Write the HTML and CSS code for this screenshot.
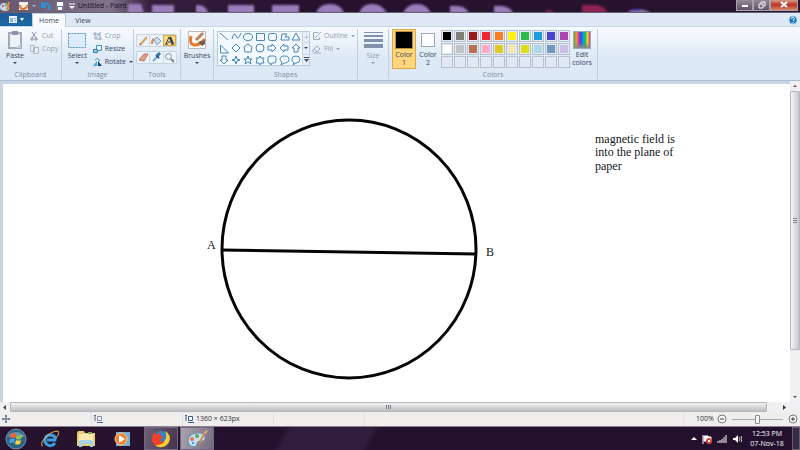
FILE: index.html
```html
<!DOCTYPE html>
<html lang="en">
<head>
<meta charset="utf-8">
<title>Untitled - Paint</title>
<link rel="stylesheet" href="styles.css">
</head>
<body>
<header class="titlebar">
  <svg class="glass" width="800" height="13" aria-hidden="true">
    <g fill="#9a7dbb">
      <path d="M128 13V4h13l3 9zM152 13V5h22v8zM196 13V5q10-1 12 8zM228 13V5h26v8zM272 13V5h27v8zM316 13q3-9 14-9t14 9zM359 13q3-9 13-9t15 9zM403 13q4-9 14-9t14 9zM450 13V6q15-2 19 7zM494 13V6q15-2 19 7zM627 13q8-7 23-1v1z"/>
    </g>
    <g fill="#8d2452"><path d="M544 13q5-6 10 0zM582 13V5h14q10 1 11 8z"/></g>
    <path d="M632 10h8" stroke="#3c36a5" stroke-width="2"/>
  </svg>
  <nav class="quick" aria-label="Quick access">
    <svg width="12" height="12" viewBox="0 0 12 12"><path d="M0 7q0-4 4-4t5 4-4 4-5-4" fill="#b9d9ee"/><circle cx="3" cy="6" r="1" fill="#e33"/><circle cx="6" cy="5" r="1" fill="#3a4"/><path d="M9 2L7 10" stroke="#f08a28" stroke-width="2"/></svg>
    <svg width="12" height="12" viewBox="0 0 12 12"><path d="M2 2h9v8H2z" fill="#f4eee9"/><path d="M3 5q0 4 3 4t5-4" fill="none" stroke="#df742f" stroke-width="2"/></svg>
    <i class="arrow pale"></i>
    <svg width="10" height="10" viewBox="0 0 10 10"><path d="M1 1v5h4M2 5q2-4 5-2t0 6" fill="none" stroke="#2c94dc" stroke-width="2"/></svg>
    <svg width="8" height="10" viewBox="0 0 8 10"><path d="M0 1h8v8H0z" fill="#7775a7"/><path d="M1 1h6v4H1zM2 6h4v3H2z" fill="#fff"/></svg>
    <svg width="7" height="8" viewBox="0 0 7 8"><path d="M0 2h6" stroke="#fff"/><path d="M0 4h6L3 7z" fill="#fff"/></svg>
  </nav>
  <h1>Untitled - Paint</h1>
  <div class="window-buttons">
    <button aria-label="Minimize"><svg width="8" height="8"><path d="M1 5h6" stroke="#fff" stroke-width="2"/></svg></button>
    <button aria-label="Restore"><svg width="8" height="8"><path d="M3 2V1h4v4H6M1 3h4v4H1z" fill="none" stroke="#fff"/></svg></button>
    <button class="close" aria-label="Close"><svg width="8" height="8"><path d="M1 1l6 5M7 1L1 6" stroke="#fff" stroke-width="2"/></svg></button>
  </div>
</header>

<nav class="tabs">
  <button class="file" aria-label="Paint menu"><svg width="20" height="9"><path d="M3 1h8v7H3z" fill="#e7f0fa"/><path d="M4 3h3v4H4zM8 3h2v1H8zM8 5h2v1H8z" fill="#8fb7de"/><path d="M14 3h4l-2 3z" fill="#fff"/></svg></button>
  <button class="tab active">Home</button>
  <button class="tab">View</button>
  <button class="help" aria-label="Help"><svg width="10" height="10"><circle cx="5" cy="5" r="4" fill="#1878c0" stroke="#9cc8e8"/><path d="M3.500 4q0-2 2-1.500t0 2.500v1M5 7v1" fill="none" stroke="#fff"/></svg></button>
</nav>

<main class="ribbon">
  <section class="group clipboard">
    <div class="tools-area">
      <button class="big"><svg width="18" height="19" viewBox="0 0 18 19"><path d="M3 2h12v15H3z" fill="#edf2f9" stroke="#a1a9bc" stroke-width="2"/><path d="M6 0h6v4H6z" fill="#8b94a8"/><path d="M15 12v5h-5z" fill="#c4cddb"/></svg>Paste<i class="arrow"></i></button>
      <div class="stack">
        <button disabled><svg width="9" height="10"><path d="M2 1l4 6M6 1L2 7" stroke="#8996ad"/><path d="M1 7h2v2H1zM5 7h2v2H5z" fill="none" stroke="#8996ad"/></svg>Cut</button>
        <button disabled><svg width="9" height="10"><path d="M.500 1.500h4v6h-4zM3.500 3.500h5v6h-5z" fill="#eaf0f8" stroke="#a9b6c8"/></svg>Copy</button>
      </div>
    </div>
    <h2>Clipboard</h2>
  </section>
  <section class="group image">
    <div class="tools-area">
      <button class="big"><svg width="20" height="19"><path d="M1.500 2.500h17v14h-17z" fill="#deebf8" stroke="#4f95c5" stroke-dasharray="2 1"/></svg>Select<i class="arrow"></i></button>
      <div class="stack">
        <button disabled><svg width="9" height="10"><path d="M2 1v7h7M0 3h7v6M3 7l5-6" fill="none" stroke="#94a4ba"/></svg>Crop</button>
        <button><svg width="9" height="10"><path d="M3.500 1.500h5v5h-5z" fill="#eef6fd" stroke="#3c8fc5"/><path d="M.500 5.500h4v3h-4z" fill="#9bcdec" stroke="#3579ad"/></svg>Resize</button>
        <button><svg width="9" height="10"><path d="M0 9l4-5v5z" fill="#45a4d8"/><path d="M5 9V4l4 5z" fill="#153e6c"/><path d="M2 3q3-3 5 1" fill="none" stroke="#2c8fc7"/></svg>Rotate<i class="arrow"></i></button>
      </div>
    </div>
    <h2>Image</h2>
  </section>
  <section class="group tools">
    <div class="tools-area tool-rows">
      <div class="tool-row">
        <button aria-label="Pencil"><svg width="11" height="11"><path d="M2 10L9 2" stroke="#dda161" stroke-width="2"/><path d="M1 10l1-2 1 1z" fill="#555"/></svg></button>
        <button aria-label="Fill with color"><svg width="11" height="11"><path d="M3 5l3-3 4 4-4 4z" fill="#cadced" stroke="#7fa3c5"/><path d="M3 4q-2 1-2 5" stroke="#e18842" stroke-width="2" fill="none"/></svg></button>
        <button class="selected" aria-label="Text"><svg width="11" height="11"><path d="M2 9L5 2l4 7M4 7h3M1 9h3M7 9h3" fill="none" stroke="#233a59"/><path d="M6 2l3 7" stroke="#233a59" stroke-width="2"/></svg></button>
      </div>
      <div class="tool-row">
        <button aria-label="Eraser"><svg width="11" height="11"><path d="M1 8l5-6h4L6 9z" fill="#e5a084" stroke="#bd7963"/></svg></button>
        <button aria-label="Color picker"><svg width="11" height="11"><path d="M2 9l4-4" stroke="#71aad1" stroke-width="2"/><path d="M5 3l3 3" stroke="#234f7b" stroke-width="2"/><path d="M6 4l3-3" stroke="#3d719e" stroke-width="3"/></svg></button>
        <button aria-label="Magnifier"><svg width="11" height="11"><circle cx="4.500" cy="4.500" r="3" fill="#e9f5ff" stroke="#8194a8"/><path d="M7 7l3 3" stroke="#76869a" stroke-width="2"/></svg></button>
      </div>
    </div>
    <h2>Tools</h2>
  </section>
  <section class="group brushes">
    <div class="tools-area">
      <button class="big"><svg width="20" height="19"><path d="M1.500.500h17v17h-17z" fill="#fbfaf9" stroke="#b9bac0"/><path d="M16 2L9 9" stroke="#b9835c" stroke-width="3"/><path d="M4 5q-2 9 4 9 5 0 10-6" fill="none" stroke="#e47a2d" stroke-width="3"/><path d="M11 11l4 4 3-2v-4z" fill="#795b54"/></svg>Brushes<i class="arrow"></i></button>
    </div>
  </section>
  <section class="group shapes">
    <div class="tools-area">
      <div class="gallery">
        <svg width="84" height="35" viewBox="0 0 84 35" role="img" aria-label="Shapes gallery">
          <g fill="none" stroke="#4388b8">
            <path d="M2 2l8 7M14 8q2-8 4-3t5-3M38.500 2.500h8v7h-8zM63 9l1-6h5l-2 3h4v3zM78 2l4 7h-8zM2.500 14v8h8zM18 13l4 4-4 4-4-4zM30 13l4 3-1 5h-6l-1-5zM50 15h4v-2l4 4-4 4v-2h-4zM70 15h-4v-2l-4 4 4 4v-2h4zM78 13l4 4h-2v4h-4v-4h-2zM4 25h4v4h2l-4 4-4-4h2zM18 25l1 3 3 1-3 1-1 3-1-3-3-1 3-1zM30 25l1 3h3l-2 2 1 3-3-2-3 2 1-3-2-2h3zM42 25l1 2h3l-1 2 1 3h-3l-1 2-1-2h-3l1-3-1-2h3zM52 32h-1q-1 0-1-1v-4q0-2 2-2h4q2 0 2 2v3q0 2-2 2h-2l-1 2z"/>
            <ellipse cx="30" cy="6" rx="4.500" ry="3.500"/><rect x="50.500" y="2.500" width="8" height="7" rx="2"/><circle cx="42" cy="17" r="4"/>
            <path d="M64 31l-1 3 3-2q5 0 5-3.500t-4.500-3.500-4.500 3q0 2 2 3M76 31l-1 3 3-2q4 0 4-3.500t-4-3.500-4 3q0 2 1 3"/>
          </g>
        </svg>
        <div class="gallery-scroll">
          <button aria-label="Scroll up"><svg width="5" height="4"><path d="M1 3l1.500-2L4 3z" fill="#9aa9bb"/></svg></button>
          <button aria-label="Scroll down"><i class="arrow"></i></button>
          <button aria-label="More shapes"><svg width="5" height="5"><path d="M0 .500h5" stroke="#344e72"/><path d="M0 2h5L2.500 5z" fill="#344e72"/></svg></button>
        </div>
      </div>
      <div class="stack">
        <button disabled><svg width="9" height="10"><path d="M6.500 1.500h-5v7h6V6M3 7l6-6" fill="none" stroke="#a1adbd"/></svg>Outline<i class="arrow"></i></button>
        <button disabled><svg width="9" height="10"><path d="M1 9h8M2 5l3-3 3 3-3 3zM1 8V5" fill="none" stroke="#9facbe"/></svg>Fill<i class="arrow"></i></button>
      </div>
    </div>
    <h2>Shapes</h2>
  </section>
  <section class="group size">
    <div class="tools-area">
      <button class="big" disabled><svg width="19" height="19"><path d="M0 1.500h19" stroke="#8190ac"/><path d="M0 5h19" stroke="#8190ac" stroke-width="2"/><path d="M0 9.500h19" stroke="#8190ac" stroke-width="3"/><path d="M0 15h19" stroke="#8190ac" stroke-width="4"/></svg>Size<i class="arrow"></i></button>
    </div>
  </section>
  <section class="group colors">
    <div class="tools-area">
      <button class="current selected"><span class="well black"></span><span>Color<br>1</span></button>
      <button class="current second"><span class="well white"></span><span>Color<br>2</span></button>
      <div class="palette">
        <button class="c1" aria-label="Black"></button><button class="c2" aria-label="Gray"></button><button class="c3" aria-label="Dark red"></button><button class="c4" aria-label="Red"></button><button class="c5" aria-label="Orange"></button><button class="c6" aria-label="Yellow"></button><button class="c7" aria-label="Green"></button><button class="c8" aria-label="Turquoise"></button><button class="c9" aria-label="Indigo"></button><button class="c10" aria-label="Purple"></button>
        <button class="c11" aria-label="White"></button><button class="c12" aria-label="Light gray"></button><button class="c13" aria-label="Brown"></button><button class="c14" aria-label="Rose"></button><button class="c15" aria-label="Gold"></button><button class="c16" aria-label="Light yellow"></button><button class="c17" aria-label="Lime"></button><button class="c18" aria-label="Light turquoise"></button><button class="c19" aria-label="Blue-gray"></button><button class="c20" aria-label="Lavender"></button>
        <button aria-label="Custom 1"></button><button aria-label="Custom 2"></button><button aria-label="Custom 3"></button><button aria-label="Custom 4"></button><button aria-label="Custom 5"></button><button aria-label="Custom 6"></button><button aria-label="Custom 7"></button><button aria-label="Custom 8"></button><button aria-label="Custom 9"></button><button aria-label="Custom 10"></button>
      </div>
      <button class="current edit"><span class="well rainbow"></span><span>Edit<br>colors</span></button>
    </div>
    <h2>Colors</h2>
  </section>
</main>

<div class="workspace">
  <div class="canvas">
    <svg width="786" height="318" viewBox="0 0 786 318">
      <ellipse cx="346" cy="165" rx="127" ry="129" fill="none" stroke="#050505" stroke-width="3"/>
      <path d="M219 166L473 170" stroke="#050505" stroke-width="3"/>
      <g class="drawn">
        <text x="204" y="165">A</text>
        <text x="483" y="172">B</text>
        <text x="592" y="59">magnetic field is</text>
        <text x="592" y="72">into the plane of</text>
        <text x="592" y="86">paper</text>
      </g>
    </svg>
  </div>
  <div class="vscroll">
    <button aria-label="Scroll up"><i class="arrow up"></i></button>
    <div class="thumb"><svg width="4" height="5"><path d="M0 .500h4M0 2.500h4M0 4.500h4" stroke="#8285a0"/></svg></div>
    <button aria-label="Scroll down"><i class="arrow"></i></button>
  </div>
  <div class="hscroll">
    <button aria-label="Scroll left"><svg width="4" height="5"><path d="M3 0v5L0 2.500z" fill="#444"/></svg></button>
    <div class="thumb"><svg width="5" height="4"><path d="M.500 0v4M2.500 0v4M4.500 0v4" stroke="#777b99"/></svg></div>
    <button aria-label="Scroll right"><svg width="4" height="5"><path d="M1 0v5l3-2.500z" fill="#333"/></svg></button>
  </div>
</div>

<footer class="status">
  <div><svg width="8" height="8"><path d="M4 0v8M0 4h8" stroke="#465d80"/><path d="M3 1h2M3 7h2M1 3v2M7 3v2" stroke="#465d80"/></svg></div>
  <div><svg width="9" height="8"><path d="M3.500 1.500h4v4h-4z" fill="none" stroke="#8191aa"/><path d="M0 .500h2M1 1v5M3 7.500h6" stroke="#526786"/></svg></div>
  <div class="dimensions"><svg width="9" height="8"><path d="M3.500 1.500h4v4h-4z" fill="#fff" stroke="#335d92"/><path d="M0 .500h2M1 1v5M3 7.500h6" stroke="#335d92"/></svg>1360 × 623px</div>
  <div></div>
  <div></div>
  <div class="zoom"><span>100%</span>
    <button aria-label="Zoom out"><svg width="10" height="10"><circle cx="5" cy="5" r="4" fill="#f7f7f7" stroke="#777"/><path d="M3 5h4" stroke="#444"/></svg></button>
    <input type="range" min="0" max="100" value="50" aria-label="Zoom">
    <button aria-label="Zoom in"><svg width="10" height="10"><circle cx="5" cy="5" r="4" fill="#f7f7f7" stroke="#777"/><path d="M3 5h4M5 3v4" stroke="#444"/></svg></button>
  </div>
</footer>

<footer class="taskbar">
  <button class="start" aria-label="Start"><svg width="22" height="22"><circle cx="11" cy="11" r="10" fill="#2d6388" stroke="#7192a8"/><path d="M2 8q9-8 18 0-5 3-9 2t-9-2" fill="#83a9bd" opacity=".7"/><path d="M6 6q3-2 5 0l-1 4q-3-1-5 0z" fill="#f0642d"/><path d="M12 7q2 1 5 0l-1 4q-3 1-5 0z" fill="#9bc645"/><path d="M5 11q3-1 5 0l-1 4q-3-1-5 0z" fill="#40a4e3"/><path d="M11 12q2 1 5 0l-1 4q-3 1-5 0z" fill="#fad337"/></svg></button>
  <button aria-label="Internet Explorer"><svg width="20" height="20"><path d="M15 14q-3 4-7 2-4-2-3-6t6-4q5 1 4 5H7" fill="none" stroke="#3b9ddd" stroke-width="3"/><path d="M3 17q-4-1 2-8T18 2q2 2-2 7" fill="none" stroke="#e9b94c" stroke-width="1"/></svg></button>
  <button aria-label="Windows Explorer"><svg width="20" height="20"><path d="M1 4l1-2h6l1 2h10v13H1z" fill="#e9ce78"/><path d="M3 5h14v7H3z" fill="#f9eaab"/><path d="M12 3h4v2h-4z" fill="#74ad61"/><path d="M3 18v-5q0-2 2-2h10q2 0 2 2v5h-3v-3H6v3z" fill="#a5d2ec"/></svg></button>
  <button aria-label="Windows Media Player"><svg width="20" height="20"><path d="M4 3h14v14H4z" fill="#74add6"/><circle cx="9" cy="10" r="6" fill="#ef802d" stroke="#fbc696"/><path d="M7 6v8l6-4z" fill="#fff"/></svg></button>
  <button class="running firefox" aria-label="Firefox"><svg width="22" height="20"><circle cx="11" cy="10" r="8" fill="#2c83c8"/><path d="M4 3l3 3q2-3 4-3-2 2 0 4l3 2q-2 1-4 1 1 4 5 2 4-2 1-8 5 5 1 11-4 5-11 2-7-4-2-14" fill="#ef402c"/><path d="M15 2q7 4 4 11-3 6-10 5-2 0-4-2 5 1 9-3 4-5 1-11z" fill="#ffcc31"/></svg></button>
  <button class="running paint" aria-label="Paint"><svg width="24" height="20"><path d="M3 12q0-7 9-8t8 6q-1 3-5 2-3 0-3 3-1 4-6 2-3-2-3-5" fill="#c2e0f2" stroke="#6192b8"/><circle cx="7" cy="10" r="2" fill="#ef7043"/><circle cx="12" cy="7" r="2" fill="#5ca94e"/><circle cx="8" cy="14" r="1" fill="#337fc4"/><path d="M20 3l-6 12" stroke="#d68845" stroke-width="2"/><path d="M19 4l2-3 2 1-2 3z" fill="#d4ab6b"/></svg></button>
  <div class="tray">
    <svg width="6" height="5"><path d="M0 4l3-3 3 3z" fill="#fff"/></svg>
    <svg width="10" height="10"><path d="M1 1v9M2 2h4l1 1h2v4H2z" fill="#fff" stroke="#fff"/><circle cx="7" cy="7" r="3" fill="#d8473b"/><path d="M6 6l2 2M8 6L6 8" stroke="#fff"/></svg>
    <svg width="10" height="10"><path d="M1 9V7M3 9V6M5 9V5M7 9V3M9 9V1" stroke="#fff"/></svg>
    <svg width="10" height="10"><path d="M1 4h2l3-3v8L3 6H1z" fill="#fff"/><path d="M7 3q2 2 0 4M9 2q2 3 0 6" fill="none" stroke="#ccc"/></svg>
  </div>
  <time>12:53 PM<br>07-Nov-18</time>
  <button class="desktop" aria-label="Show desktop"></button>
</footer>
</body>
</html>
```

FILE: styles.css
```css
* { box-sizing: border-box; }
body {
  margin: 0;
  height: 100vh;
  display: flex;
  flex-direction: column;
  overflow: hidden;
  background: #c8d3e4;
  color: #34465f;
  font: 7px/8px "Open Sans", "Noto Sans", sans-serif;
}
button {
  display: flex;
  align-items: center;
  justify-content: center;
  margin: 0;
  padding: 0;
  border: 0;
  background: none;
  color: inherit;
  font: inherit;
}
svg { display: block; flex: none; }
h1, h2 { margin: 0; font: inherit; }
.arrow {
  display: block;
  border: 2px solid transparent;
  border-top-color: currentColor;
  border-bottom: 0;
}
.arrow.up {
  border-top: 0;
  border-bottom: 2px solid currentColor;
}
.arrow.pale { color: #aab9d7; }

.titlebar {
  position: relative;
  flex: 0 0 13px;
  display: flex;
  align-items: center;
  background: linear-gradient(90deg, #66576e, #80728b 110px, #35203f 150px, #26112f 300px, #29142f);
  border-bottom: 1px solid #6c6075;
  overflow: hidden;
}
.glass {
  position: absolute;
  inset: 0;
  filter: blur(1px);
}
.quick {
  position: relative;
  display: flex;
  align-items: center;
  gap: 5px;
  width: 78px;
}
.quick .arrow { margin: 0 0 0 -2px; }
h1 {
  position: relative;
  color: #15101b;
}
.window-buttons {
  position: relative;
  display: flex;
  align-self: flex-start;
  margin-left: auto;
  margin-right: 2px;
}
.window-buttons button {
  width: 17px;
  height: 11px;
  background: linear-gradient(#948b99, #5e5264);
  border: 1px solid #a9a1ae;
  border-top: 0;
}
.window-buttons .close {
  width: 28px;
  background: linear-gradient(#d79b87, #b93222 50%, #d78b68);
}

.tabs {
  flex: 0 0 14px;
  display: flex;
  align-items: stretch;
  background: #dfe9f5;
  border-bottom: 1px solid #c9d6e7;
}
.tabs .file { width: 32px; background: linear-gradient(#245b98, #1768a9); }
.tab { width: 34px; padding-top: 2px; }
.tab.active {
  background: #fafcff;
  border: 1px solid #bccce0;
  border-bottom: 0;
  border-radius: 2px 2px 0 0;
  padding-top: 0;
  margin-bottom: -1px;
}
.tabs .help { margin-left: auto; width: 14px; }

.ribbon {
  flex: 0 0 54px;
  display: flex;
  align-items: stretch;
  padding: 2px 0 1px;
  background: linear-gradient(#f7fbff, #dce8f4 60%, #dde9f6);
  border-bottom: 1px solid #abbfd9;
}
.group {
  display: flex;
  flex-direction: column;
  justify-content: space-between;
  border-right: 1px solid #c1cddc;
}
.group h2 { color: #7d8b9f; text-align: center; }
.tools-area { display: flex; height: 42px; padding-top: 2px; }
.clipboard { width: 62px; }
.image { width: 72px; }
.tools { width: 47px; }
.brushes { width: 33px; }
.shapes { width: 144px; }
.size { width: 31px; }
.colors { width: 209px; }
.big {
  flex-direction: column;
  justify-content: flex-start;
  width: 30px;
  height: 35px;
  line-height: 11px;
}
.image .big, .brushes .big, .size .big { margin: 0 1px; }
.big .arrow { margin-top: 1px; }
.stack {
  display: flex;
  flex-direction: column;
  gap: 3px;
  padding-left: 2px;
}
.stack button { justify-content: flex-start; gap: 3px; height: 10px; }
.clipboard .stack, .image .stack { margin-left: -2px; }
button:disabled { color: #919eaf; }
.tool-rows {
  flex-direction: column;
  gap: 4px;
  padding: 5px 3px 0 2px;
}
.tool-row {
  display: flex;
  height: 13px;
  border: 1px solid #c7d4e4;
  border-radius: 1px;
  background: #eaf3fc;
}
.tool-row button { flex: 1; }
.tool-row button + button { border-left: 1px solid #cedae8; }
.tool-row .selected, .current.selected {
  background: #ffd679;
  outline: 1px solid #dca84b;
  outline-offset: -1px;
}
.shapes .tools-area { padding-left: 3px; }
.gallery {
  display: flex;
  width: 93px;
  height: 35px;
  border: 1px solid #b9cbdf;
  background: #f4f9ff;
}
.gallery > svg { margin-top: -1px; }
.gallery-scroll {
  flex: 1;
  display: flex;
  flex-direction: column;
  border-left: 1px solid #c5d2e2;
}
.gallery-scroll button { flex: 1; background: #e5eef8; }
.gallery-scroll button + button { border-top: 1px solid #cbd7e5; }
.size .big { width: 28px; }
.colors .tools-area { padding: 0 3px; }
.current {
  flex-direction: column;
  justify-content: flex-start;
  width: 24px;
  height: 40px;
  padding-top: 2px;
  text-align: center;
}
.well {
  width: 18px;
  height: 18px;
  margin-bottom: 2px;
  border: 1px solid #9caabd;
}
.well.black { background: #000; border-color: #b98d43; }
.well.white { width: 14px; height: 14px; margin: 2px 0 4px; background: #fff; }
.well.rainbow { background: linear-gradient(transparent 65%, #888), linear-gradient(90deg, #5a4, #e93 15%, #c3a 30%, #25d 45%, #0ae 60%, #1b4 70%, #ed2 85%, #d2a); }
.palette {
  display: grid;
  grid-template-columns: repeat(10, 12px);
  grid-auto-rows: 12px;
  gap: 1px;
  padding-top: 1px;
  margin-left: 1px;
}
.palette button {
  border: 1px solid #b7bfcc;
  box-shadow: inset 0 0 0 1px #e4ebf4;
  background: #dfe8f3;
}
.palette .c1 { background: #000; }
.palette .c2 { background: #827f7b; }
.palette .c3 { background: #98191e; }
.palette .c4 { background: #ed2632; }
.palette .c5 { background: #f87e24; }
.palette .c6 { background: #fff018; }
.palette .c7 { background: #2abb4a; }
.palette .c8 { background: #1d9edc; }
.palette .c9 { background: #4545cf; }
.palette .c10 { background: #a846ae; }
.palette .c11 { background: #fff; }
.palette .c12 { background: #c3c3c5; }
.palette .c13 { background: #ba704f; }
.palette .c14 { background: #ffabc8; }
.palette .c15 { background: #ddcc1c; }
.palette .c16 { background: #f2e4b4; }
.palette .c17 { background: #dddc16; }
.palette .c18 { background: #acd7e8; }
.palette .c19 { background: #6e98c2; }
.palette .c20 { background: #cbbfe6; }

.workspace {
  flex: 1;
  min-height: 0;
  display: grid;
  grid-template-columns: minmax(0, 1fr) 10px;
  grid-template-rows: minmax(0, 1fr) 10px;
}
.canvas { margin: 3px 0 0 3px; overflow: hidden; background: #fff; }
.drawn { font: 12px "Liberation Serif", serif; fill: #151520; }
.vscroll { display: flex; flex-direction: column; background: #f0f0f2; }
.vscroll button, .hscroll button { flex: 0 0 10px; color: #4d4e59; }
.thumb {
  display: flex;
  align-items: center;
  justify-content: center;
  border: 1px solid #b6b7bc;
  border-radius: 1px;
}
.vscroll .thumb { flex: 0 1 259px; background: linear-gradient(90deg, #f5f5f6, #c6c8cc); }
.vscroll button:last-child { margin-top: auto; }
.hscroll { grid-column: 1 / -1; display: flex; background: #f0f0f2; }
.hscroll .thumb { flex: 1; background: linear-gradient(#f3f3f3, #bbbdc0); }
.hscroll button:last-child { flex-basis: 33px; }

.status {
  flex: 0 0 14px;
  display: grid;
  grid-template-columns: 92px 91px 91px 91px 1fr 116px;
  background: #f0eeed;
  color: #303039;
}
.status > div {
  display: flex;
  align-items: center;
  gap: 2px;
  padding-left: 2px;
  border-right: 1px solid #dfe1e5;
}
.status .zoom { border: 0; padding: 0 2px 0 12px; }
.zoom span { flex: 1; }
.zoom input {
  width: 51px;
  height: 10px;
  margin: 0 3px;
  appearance: none;
  background: linear-gradient(#a4a7ae, #a4a7ae) center / 100% 1px no-repeat;
}
.zoom input::-webkit-slider-thumb {
  appearance: none;
  width: 5px;
  height: 9px;
  border: 1px solid #858992;
  border-radius: 1px;
  background: #f6f6f7;
}

.taskbar {
  flex: 0 0 24px;
  display: flex;
  align-items: stretch;
  background: linear-gradient(120deg, #28132f 20%, #22102c 35%, #301d3b 36%, #301d3b 46%, #22102c 47%, #22102c);
  border-top: 1px solid #8c8191;
  color: #fff;
}
.taskbar > button { width: 36px; }
.taskbar .start { width: 32px; }
.taskbar .running {
  border: 1px solid #74677f;
  background: linear-gradient(110deg, #6d6074, #43334f);
}
.taskbar .firefox { margin-left: 4px; margin-right: 2px; width: 34px; }
.taskbar .paint { width: 34px; background: linear-gradient(110deg, #aaa4b0, #746a7f); }
.tray { display: flex; align-items: center; gap: 5px; margin-left: auto; }
time { width: 50px; line-height: 10px; padding-top: 2px; text-align: center; }
.taskbar .desktop { width: 8px; border: 1px solid #685d70; background: #3a2b44; }
```
